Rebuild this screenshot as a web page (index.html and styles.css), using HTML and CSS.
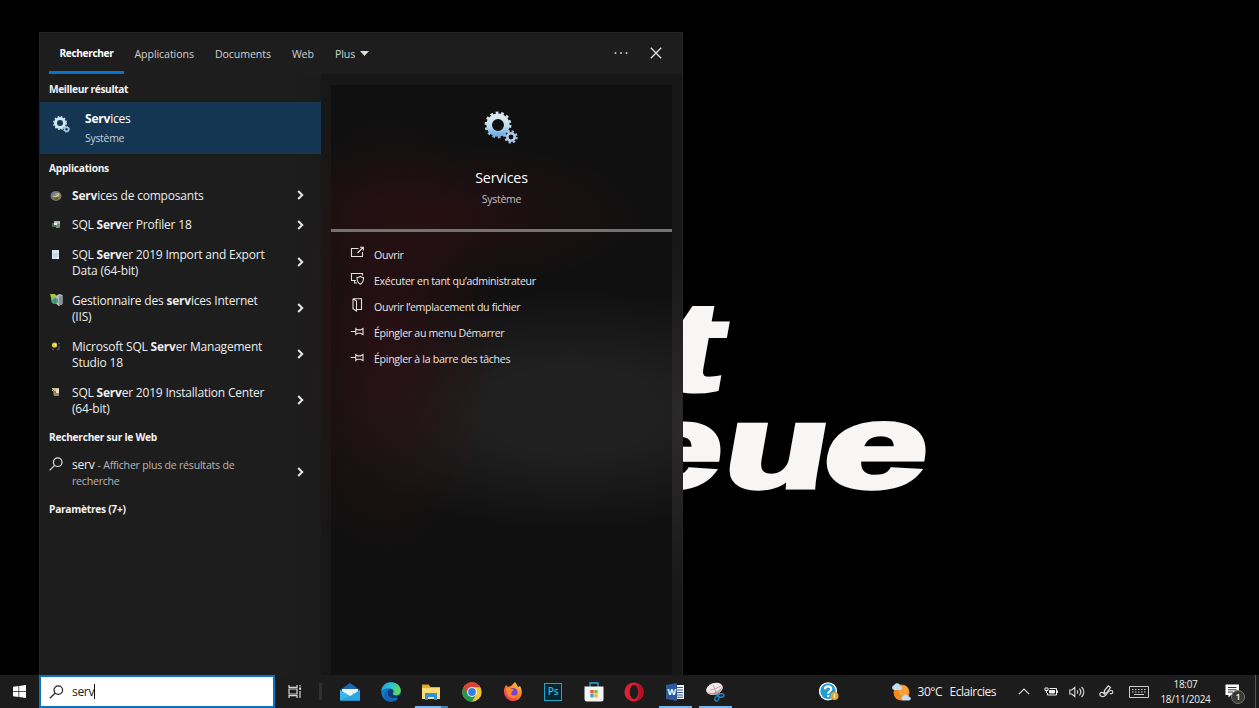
FILE: index.html
```html
<!DOCTYPE html>
<html lang="fr">
<head>
<meta charset="utf-8">
<title>Recherche - Services</title>
<link rel="stylesheet" href="styles.css">
</head>
<body>
<div class="desktop">
  <svg class="wallpaper" viewBox="0 0 1259 675" width="1259" height="675">
    <text class="wall-text" transform="translate(613 487) skewX(-10) scale(1.45 1)" x="18.500 6.500 73.200" y="-97 0 0" font-size="117"><tspan font-size="125">t</tspan>eu</text>
    <text class="wall-text" transform="translate(818.5 487) skewX(-10) scale(1.58 1)" x="0" y="0" font-size="118">e</text>
  </svg>

  <main class="search-panel">
    <header class="tabs">
      <a class="tab active">Rechercher</a>
      <a class="tab">Applications</a>
      <a class="tab">Documents</a>
      <a class="tab">Web</a>
      <a class="tab">Plus <svg width="9" height="5" viewBox="0 0 9 5"><path d="M0 0h9L4.500 5z" fill="#ddd"/></svg></a>
      <span class="tab-tools">
        <svg width="14" height="4" viewBox="0 0 14 4" fill="#ccc"><circle cx="1.500" cy="2" r="1"/><circle cx="7" cy="2" r="1"/><circle cx="12.500" cy="2" r="1"/></svg>
        <svg width="12" height="12" viewBox="0 0 12 12"><path d="M.8.8l10.400 10.400M11.200.8L.8 11.200" stroke="#e2e2e2" stroke-width="1.300"/></svg>
      </span>
    </header>

    <div class="panel-body">
      <section class="results">
        <h2 class="group first">Meilleur résultat</h2>
        <div class="best">
          <svg width="17" height="17" viewBox="0 0 34 34">
            <circle cx="14" cy="14" r="9" fill="none" stroke="#cfe6f2" stroke-width="6"/>
            <circle cx="14" cy="14" r="12.400" fill="none" stroke="#cfe6f2" stroke-width="3" stroke-dasharray="3.250 3.250"/>
            <circle cx="27" cy="26.500" r="4" fill="none" stroke="#a9cbe6" stroke-width="3"/>
            <circle cx="27" cy="26.500" r="6" fill="none" stroke="#a9cbe6" stroke-width="2" stroke-dasharray="2.350 2.350"/>
          </svg>
          <div class="best-text"><span class="best-name"><b>Serv</b>ices</span><span class="best-kind">Système</span></div>
        </div>

        <h2 class="group">Applications</h2>
        <div class="row short">
          <svg class="app-icon" width="12" height="12" viewBox="0 0 12 12"><ellipse cx="6" cy="6" rx="5.500" ry="5" fill="#77736c"/><circle cx="4" cy="4" r="2.200" fill="#6f7d9b"/><circle cx="7.500" cy="5" r="2.300" fill="#c0a663"/><circle cx="6" cy="8.200" r="2" fill="#6b5c3c"/><path d="M3 6l3 1 3-3" stroke="#ddd1a8" fill="none"/></svg>
          <span class="name"><b>Serv</b>ices de composants</span>
          <svg class="chev" width="7" height="10" viewBox="0 0 7 10"><path d="M1.200 1l4 4-4 4"/></svg>
        </div>
        <div class="row short">
          <svg class="app-icon" width="12" height="12" viewBox="0 0 12 12"><path d="M4 2h6v4H4z" fill="#a9bbb2"/><path d="M2 4h4v4H2z" fill="#3f7556"/><path d="M6 5h4v4H6z" fill="#72937c"/><path d="M4 4h3v2H4z" fill="#e3ece6"/></svg>
          <span class="name">SQL <b>Serv</b>er Profiler 18</span>
          <svg class="chev" width="7" height="10" viewBox="0 0 7 10"><path d="M1.200 1l4 4-4 4"/></svg>
        </div>
        <div class="row">
          <svg class="app-icon" width="12" height="12" viewBox="0 0 12 12"><path d="M2 1h7v9H2z" fill="#d5e5f3"/><path d="M3 4h5v4H3z" fill="#c5d8e9"/><path d="M7 8h2v2H7z" fill="#fff"/></svg>
          <span class="name">SQL <b>Serv</b>er 2019 Import and Export<br>Data (64-bit)</span>
          <svg class="chev" width="7" height="10" viewBox="0 0 7 10"><path d="M1.200 1l4 4-4 4"/></svg>
        </div>
        <div class="row">
          <svg class="app-icon iis" width="13" height="13" viewBox="0 0 13 13"><circle cx="5" cy="7" r="4" fill="#3b8d9b"/><path d="M0 1h5l2 3-3 1-2 3z" fill="#9fca38"/><path d="M2 7l4 3-2 1z" fill="#48a35a"/><path d="M5.500 3l4-2 3 1v9l-4 2-2-2z" fill="#b8bdbf"/><path d="M9 3.500l3.500-1.300v9L9 12.700z" fill="#8b9096"/><path d="M6 5l2 1v4l-2-1z" fill="#4e9f6c"/></svg>
          <span class="name">Gestionnaire des <b>serv</b>ices Internet<br>(IIS)</span>
          <svg class="chev" width="7" height="10" viewBox="0 0 7 10"><path d="M1.200 1l4 4-4 4"/></svg>
        </div>
        <div class="row">
          <svg class="app-icon" width="12" height="12" viewBox="0 0 12 12"><circle cx="4.500" cy="4" r="2.600" fill="#e4cd3a"/><circle cx="5.500" cy="3.500" r="1" fill="#fff6b0"/><path d="M8 2l2 1M9 5v3l-2 1" stroke="#405375" stroke-width="1.300" fill="none"/><path d="M2 8l2 1" stroke="#80763a"/></svg>
          <span class="name">Microsoft SQL <b>Serv</b>er Management<br>Studio 18</span>
          <svg class="chev" width="7" height="10" viewBox="0 0 7 10"><path d="M1.200 1l4 4-4 4"/></svg>
        </div>
        <div class="row">
          <svg class="app-icon" width="12" height="12" viewBox="0 0 12 12"><path d="M2 1h7v3H2z" fill="#c8bf91"/><path d="M3 4h6v5H4z" fill="#9a8a63"/><path d="M6 2h3v4H6z" fill="#e6dfc5"/><path d="M2 2l4 4" stroke="#726a47"/><path d="M7 6h2v3H7z" fill="#b9786a"/></svg>
          <span class="name">SQL <b>Serv</b>er 2019 Installation Center<br>(64-bit)</span>
          <svg class="chev" width="7" height="10" viewBox="0 0 7 10"><path d="M1.200 1l4 4-4 4"/></svg>
        </div>

        <h2 class="group web-head">Rechercher sur le Web</h2>
        <div class="row web">
          <svg class="app-icon" width="14" height="14" viewBox="0 0 14 14" fill="none" stroke="#ddd" stroke-width="1.200"><circle cx="8.700" cy="5.200" r="4.300"/><path d="M5.600 8.400L.6 13.400"/></svg>
          <span class="name">serv <small>- Afficher plus de résultats de<br>recherche</small></span>
          <svg class="chev" width="7" height="10" viewBox="0 0 7 10"><path d="M1.200 1l4 4-4 4"/></svg>
        </div>
        <h2 class="group">Paramètres (7+)</h2>
      </section>

      <section class="preview">
        <div class="hero">
          <svg width="35" height="34" viewBox="0 0 35 34">
            <defs><linearGradient id="steel" x1="0" y1="0" x2="0" y2="1"><stop offset="0" stop-color="#dde8f0"/><stop offset=".55" stop-color="#bfe0ec"/><stop offset="1" stop-color="#78aee3"/></linearGradient></defs>
            <circle cx="14" cy="14" r="8.800" fill="none" stroke="url(#steel)" stroke-width="5.600"/>
            <circle cx="14" cy="14" r="12.200" fill="none" stroke="url(#steel)" stroke-width="2.400" stroke-dasharray="2.740 2.740"/>
            <circle cx="27" cy="26" r="3.700" fill="#111" stroke="#b4cbea" stroke-width="2.600"/>
            <circle cx="27" cy="26" r="5.600" fill="none" stroke="#a5bfe4" stroke-width="2.200" stroke-dasharray="2.200 2.200"/>
          </svg>
          <h1>Services</h1>
          <p>Système</p>
        </div>
        <ul class="actions">
          <li><svg width="15" height="14" viewBox="0 0 15 14"><path d="M8.500 2.500h-7v8h11V6M7.500 7L13 1.500M10 1.300h3.300v3.300"/></svg><span>Ouvrir</span></li>
          <li><svg width="15" height="14" viewBox="0 0 15 14"><path d="M6 8.500H1.500v-7h11v2M4.500 8.500v2.500H7M7 5.500c1.500 0 2.500-.4 3.300-1.200.8.800 1.800 1.200 3.200 1.200 0 3.600-.7 5.400-3.200 6.700C7.800 10.900 7 9.100 7 5.500z"/></svg><span>Exécuter en tant qu’administrateur</span></li>
          <li><svg width="15" height="14" viewBox="0 0 15 14"><path d="M3 .7h8.500v10.800H7M3 .7v10l3.500 2.300V3L3 .7"/></svg><span>Ouvrir l’emplacement du fichier</span></li>
          <li><svg width="15" height="14" viewBox="0 0 15 14"><path d="M.8 6.500h5M5.800 2.800v7.400M5.800 4l2.200.9h2.500l2.500-1.400v6l-2.500-1.300H8L5.800 9"/></svg><span>Épingler au menu Démarrer</span></li>
          <li><svg width="15" height="14" viewBox="0 0 15 14"><path d="M.8 6.500h5M5.800 2.800v7.400M5.800 4l2.200.9h2.500l2.500-1.400v6l-2.500-1.300H8L5.800 9"/></svg><span>Épingler à la barre des tâches</span></li>
        </ul>
      </section>
    </div>
  </main>

  <footer class="taskbar">
    <div class="start"><svg width="13" height="13" viewBox="0 0 13 13" fill="#fff"><path d="M0 1.800l5.500-.8v5.200H0zM6.200.9L13 0v6.200H6.200zM0 6.900h5.500V12L0 11.200zM6.200 6.900H13V13l-6.800-.9z"/></svg></div>
    <div class="search-box">
      <svg width="15" height="14" viewBox="0 0 15 14" fill="none" stroke="#222" stroke-width="1.200"><circle cx="9.300" cy="5.100" r="4.300"/><path d="M6.100 8.300L.8 13.300"/></svg>
      <span class="query">serv</span><i class="caret"></i>
    </div>
    <div class="task-view"><svg width="14" height="13" viewBox="0 0 14 13" fill="none" stroke="#d6d6d6" stroke-width="1.200"><path d="M1 0v2.400h8V0M1 13v-2.400h8V13M1 4h8v5H1zM12 0v1.500M12 6v7"/><path d="M11.100 2.500h2v2.300h-2z" fill="#ddd" stroke="none"/></svg></div>
    <i class="divider"></i>
    <div class="apps">
      <span class="app"><svg width="20" height="20" viewBox="0 0 20 20"><path d="M0 8l10-7 10 7v10H0z" fill="#1868b6"/><path d="M2 7h16v3l-7 5-9-5z" fill="#f0f4f8"/><path d="M0 8l11 6.500L20 18.500H0z" fill="#35b8ee"/><path d="M0 18.500L11 13.500 20 8v10.500z" fill="#2ba6e4"/></svg></span>
      <span class="app"><svg width="20" height="20" viewBox="0 0 20 20"><defs><linearGradient id="edge" x1="0" y1="0" x2="1" y2=".3"><stop offset="0" stop-color="#1d9de0"/><stop offset=".55" stop-color="#2bc3d2"/><stop offset="1" stop-color="#65d65a"/></linearGradient></defs><circle cx="10" cy="10" r="9.800" fill="#1576c8"/><path d="M.3 9C1 3.500 5 .2 10 .2c5.800 0 9.800 4 9.800 8.300 0 3-2.300 4.800-4.900 4.800-2.100 0-3.200-.7-3.200-1.500 0-.5.800-.9.800-2.100 0-2-2-3.500-4.800-3.500C4.500 6.200 1.500 7.400.3 9z" fill="url(#edge)"/><path d="M6.500 11c0-2 1.300-3.500 3-4.200 2 .4 3 1.500 3 2.900 0 1.200-.8 1.500-.8 2.100 0 1.100 1.500 1.900 3.600 1.900 1.500 0 2.500-.4 3.300-.8-1.100 2-3.400 3.300-6 3.300-3.400 0-6.100-2.200-6.100-5.200z" fill="#0d3d73"/><path d="M16 13.700c2 0 3.200-.9 3.200-.9l.5 1.700-3 4z" fill="#1c1c1c"/><path d="M6.500 11c0 5 5 6.900 9.700 4.400-2.500 4.300-7 5-10.500 3.300C1.800 16.500 2 9.500 9.500 6.800 7.800 7.500 6.500 9 6.500 11z" fill="#1764b5"/></svg></span>
      <span class="app open two"><svg width="20" height="18" viewBox="0 0 20 18"><path d="M1 2h7l1.500 2H19v12H1z" fill="#e9aa32"/><path d="M1 5h18v11H1z" fill="#ffdb77"/><path d="M4 10h12v7h-3v-3H7v3H4z" fill="#3193d7"/><path d="M1 1.500h7V3H1z" fill="#dda12b"/></svg></span>
      <span class="app"><svg width="20" height="20" viewBox="0 0 20 20"><circle cx="10" cy="10" r="9.700" fill="#f5c733"/><path d="M10 10L1.600 5.100A9.700 9.700 0 0 0 10 19.700l4.200-7.300z" fill="#25974c"/><path d="M10 10V5.200h8.400A9.700 9.700 0 0 0 1.600 5.100L5.800 12.400z" fill="#df4034"/><circle cx="10" cy="10" r="4.900" fill="#fff"/><circle cx="10" cy="10" r="3.900" fill="#347ee8"/></svg></span>
      <span class="app"><svg width="20" height="20" viewBox="0 0 20 20"><defs><linearGradient id="fox" x1="1" y1="0" x2=".2" y2="1"><stop offset="0" stop-color="#ffdf3e"/><stop offset=".45" stop-color="#ff8b26"/><stop offset="1" stop-color="#ed2860"/></linearGradient></defs><path d="M3 3l2 2 3-1 4-4 2 3 1 2 2-1c4 7 1 15-7 15C3 19-2 11 3 3z" fill="url(#fox)"/><circle cx="10" cy="10.500" r="4.600" fill="#7742d3"/><path d="M3 6l4-1 1 2 3 .500-2 2-1 3c2 2 5 1 6.200-.6-.6 4.500-7.500 5.500-9.700 1z" fill="#ff8725"/></svg></span>
      <span class="app"><span class="ps">Ps</span></span>
      <span class="app"><svg width="20" height="20" viewBox="0 0 20 20"><path d="M6 5V1h8v4" fill="none" stroke="#2ba7dd" stroke-width="1.300"/><path d="M.5 4.500h19V17a2.500 2.500 0 0 1-2.500 2.500H3A2.500 2.500 0 0 1 .500 17z" fill="#f5f5f5"/><path d="M6.300 8h3.400v3.400H6.300z" fill="#eb5536"/><path d="M10.300 8h3.400v3.400h-3.400z" fill="#7fb93e"/><path d="M6.300 12h3.400v3.400H6.300z" fill="#3e9fe0"/><path d="M10.300 12h3.400v3.400h-3.400z" fill="#f4b92f"/></svg></span>
      <span class="app"><svg width="20" height="20" viewBox="0 0 20 20"><ellipse cx="10" cy="10" rx="9.600" ry="9.400" fill="#df2033"/><path d="M10 .6c5.500 0 9.600 4 9.600 9.400s-4.100 9.400-9.600 9.400c3-1 5-4.500 5-9.400S13 1.600 10 .6z" fill="#b51324"/><ellipse cx="10" cy="10" rx="4.300" ry="7.200" fill="#1d1d1d"/></svg></span>
      <span class="app open"><svg width="19" height="18" viewBox="0 0 19 18"><path d="M9 2h9v14H9z" fill="#f7f9fc"/><path d="M11 4.500h6M11 7h6M11 9.500h6M11 12h6M11 14.200h6" stroke="#2e579c"/><path d="M0 2l11-2v18L0 16z" fill="#2e579c"/><text x="1.400" y="12" class="word-letter">W</text></svg></span>
      <span class="app open"><svg width="21" height="20" viewBox="0 0 21 20"><ellipse cx="9.500" cy="6.800" rx="8.500" ry="5.800" transform="rotate(-18 9.500 6.800)" fill="#f1e9ea"/><path d="M2 10c4 2 11 0 15-5-1 5-4 8-8 8-3 0-6-1-7-3z" fill="#c7a6ab"/><path d="M5 8l5-1 6-3M10 7L8 3" stroke="#d09aa0" fill="none"/><path d="M10 8l3 7M9 12l6 0" stroke="#999"/><ellipse cx="12" cy="16.500" rx="1.900" ry="2.700" transform="rotate(25 12 16.500)" fill="none" stroke="#2387c5" stroke-width="1.400"/><ellipse cx="16" cy="13.500" rx="2.900" ry="1.700" fill="none" stroke="#2387c5" stroke-width="1.400"/></svg></span>
    </div>
    <div class="help"><svg width="20" height="19" viewBox="0 0 20 19"><circle cx="9" cy="9.300" r="8.400" fill="#249bd2" stroke="#f5f9fb" stroke-width="1.400"/><path d="M6 7.200C6 3.500 12.300 3.500 12.300 7c0 2.300-3.100 2.300-3.100 4.700M9.200 13v2" fill="none" stroke="#fff" stroke-width="2.100"/><circle cx="15.500" cy="14" r="4" fill="#e1a831"/><path d="M15.500 11.600v4.600" stroke="#fff5c8" stroke-width="1.200"/></svg></div>
    <div class="weather"><svg width="21" height="20" viewBox="0 0 21 20"><circle cx="10.500" cy="10.500" r="8" fill="#f18b24"/><circle cx="12.500" cy="9" r="5" fill="#f7a13a"/><path d="M3 8a2.400 2.400 0 0 1 0-4.700C4.500.3 8.500.8 9 3.500a2.300 2.300 0 0 1 .5 4.500zM12 18.500a2.400 2.400 0 0 1 .3-4.600c1.300-2.300 4.700-1.800 5.200.5a2.100 2.100 0 0 1 .8 4.100z" fill="#c6dcf4"/></svg><span class="temp">30°C</span><span class="sky">Eclaircies</span></div>
    <div class="tray">
      <svg class="t1" width="12" height="7" viewBox="0 0 12 7" fill="none" stroke="#ddd" stroke-width="1.200"><path d="M.8 6.200L6 1l5.200 5.200"/></svg>
      <svg class="t2" width="14" height="10" viewBox="0 0 14 10"><path d="M5.500 1.500H12.500v6.500H3.500V6" fill="none" stroke="#eee"/><path d="M5.500 3.500h5v2.500h-5z" fill="#eee" stroke="#eee"/><path d="M13 3.500h1v2.500h-1z" fill="#eee"/><path d="M1 1h3v2.500H1zM2.500 3.500V6" stroke="#eee" fill="none"/></svg>
      <svg class="t3" width="16" height="12" viewBox="0 0 16 12" fill="none" stroke="#ddd" stroke-width="1.100"><path d="M.8 4h2l3-2.500v9L2.800 8h-2zM8 4.300c1 1 1 2.400 0 3.400M10.300 2.700c2 2 2 4.600 0 6.600M12.600 1c3 3 3 7 0 10"/></svg>
      <svg class="t4" width="15" height="14" viewBox="0 0 15 14" fill="none" stroke="#ddd" stroke-width="1.200"><path d="M6.200 9.500C3.500 6.300.8 7.300.8 9.300c0 2.500 4 3 5.700 1l3-3.600c1.500-1.800 4.300-1.500 4.300.3 0 1.500-1.600 2-3 1.500"/><path d="M5.200 8.500l.3-3L9.300.9l2.200 1.700-3.800 5z"/></svg>
      <svg class="t5" width="20" height="12" viewBox="0 0 20 12" fill="none" stroke="#ccc"><path d="M.5.5h19v11H.5z"/><path d="M3 3.500h14M3 6h14" stroke-dasharray="1.500 1.500"/><path d="M5 8.500h10"/></svg>
    </div>
    <div class="clock"><span>18:07</span><span>18/11/2024</span></div>
    <div class="notify"><svg width="15" height="14" viewBox="0 0 15 14"><path d="M.500.500h13.500v10.500H6L3.500 13.500V11h-3z" fill="#fff"/><path d="M3 3.500h8.500M3 5.800h8.500M3 8.100h5" stroke="#333"/></svg><b class="badge">1</b></div>
  </footer>
</div>
</body>
</html>
```

FILE: styles.css
```css
* { box-sizing: border-box; }
body { margin: 0; background: #000; color: #f0f0f0; font-family: "Open Sans", "Noto Sans", sans-serif; }
h1, h2, p, ul { margin: 0; padding: 0; font-weight: 400; }
svg { display: block; flex: none; }
b { font-weight: 700; }

.desktop { position: relative; width: 1259px; height: 708px; overflow: hidden; display: flex; flex-direction: column; background: #000; }
.wallpaper { position: absolute; left: 0; top: 0; }
.wall-text { font-family: "Liberation Sans", sans-serif; font-weight: 700; fill: #f8f5f5; stroke: #f8f5f5; stroke-width: 5px; }

.search-panel { position: relative; width: 644px; height: 643px; margin: 32px 0 0 39px; display: flex; flex-direction: column; background: #171717; border: 1px solid #252525; border-width: 1px 1px 0; overflow: hidden; flex: none; }
.tabs { height: 41px; flex: none; display: flex; align-items: stretch; padding-left: 9px; background: #1d1d1d; font-size: 10.6px; letter-spacing: -.08px; color: #d0d0d0; }
.tab { display: flex; align-items: center; gap: 5px; padding: 0 10.5px; white-space: nowrap; }
.tab.active { font-weight: 700; color: #fff; border-bottom: 3px solid #0873c8; padding-top: 2px; width: 75px; font-size: 10.2px; letter-spacing: -.4px; }
.tab-tools { margin-left: auto; display: flex; align-items: center; gap: 22px; padding: 0 20px 1px 0; }

.panel-body { flex: 1; display: flex; gap: 10px; background: radial-gradient(ellipse 70px 210px at 290px 250px, #241315, transparent), radial-gradient(ellipse 60px 180px at 640px 350px, #2d2a2b, transparent), #171717; }
.results { width: 281px; background: linear-gradient(90deg, #1d1d1d 88%, rgba(29, 29, 29, .72)); }
.group { height: 27px; display: flex; align-items: center; padding: 1px 0 0 9px; font-size: 10.2px; letter-spacing: -.27px; font-weight: 700; color: #f2f2f2; }
.group.first { height: 28px; padding-top: 2px; letter-spacing: -.38px; }
.group.web-head { padding: 0 0 1px 9px; }
.best { height: 52px; display: flex; gap: 15px; padding: 8px 0 0 13px; background: #143652; }
.best > svg { margin-top: 6px; }
.best-text { display: flex; flex-direction: column; }
.best-name { font-size: 12px; line-height: 18px; color: #fff; letter-spacing: -.2px; }
.best-kind { font-size: 10.5px; line-height: 21px; color: #c2ced8; letter-spacing: -.3px; }
.row { height: 46px; display: grid; grid-template-columns: 22px 1fr 7px; align-items: center; padding: 0 17px 0 10px; font-size: 12px; letter-spacing: -.2px; line-height: 16.5px; color: #ececec; }
.row.short { height: 29.5px; }
.row.web { height: 44px; }
.app-icon { align-self: start; margin-top: 8.5px; }
.iis { margin-top: 7px; }
.web .app-icon { margin-top: 6px; margin-left: -1px; }
.name { white-space: nowrap; }
.name small { font-size: 10.6px; letter-spacing: -.23px; color: #b6b6b6; }
.chev { margin-bottom: 2px; }
.short .chev { margin-bottom: 1px; }
.chev path { fill: none; stroke: #e6e6e6; stroke-width: 2; }

.preview { width: 341px; margin-top: 11px; background: radial-gradient(ellipse 200px 75px at 120px 130px, rgba(48, 15, 19, .6), transparent), radial-gradient(ellipse 110px 230px at 55px 250px, rgba(48, 15, 19, .75), transparent), radial-gradient(ellipse 260px 120px at 240px 325px, #202020 35%, transparent), #101010; }
.hero { height: 147px; border-bottom: 3px solid #777071; display: flex; flex-direction: column; align-items: center; padding-top: 26px; }
.hero h1 { margin-top: 22px; font-size: 14.3px; letter-spacing: -.2px; line-height: 22px; color: #fff; }
.hero p { margin-top: 1px; font-size: 10.6px; letter-spacing: -.3px; line-height: 18px; color: #c4bdbd; }
.actions { list-style: none; padding: 9.5px 0 0 18px; }
.actions li { height: 26.2px; display: flex; align-items: center; gap: 10px; font-size: 10.6px; letter-spacing: -.3px; color: #e8e4e4; white-space: nowrap; }
.actions svg { margin: 0 -1px 3px 1px; fill: none; stroke: #e4dfdf; stroke-width: 1.1; }

.taskbar { position: relative; height: 33px; flex: none; display: flex; align-items: center; background: #1c1c1c; font-size: 12px; }
.start { width: 39px; display: flex; justify-content: center; }
.search-box { width: 236px; height: 33px; border: 2px solid #0b72c4; background: #fff; display: flex; align-items: center; padding-left: 8px; color: #222; }
.query { margin-left: 8px; font-size: 12.2px; letter-spacing: -.4px; }
.caret { width: 1px; height: 15px; background: #111; }
.task-view { width: 40px; display: flex; justify-content: center; }
.divider { width: 3px; height: 17px; margin-left: 4px; background: #303030; }
.apps { display: flex; margin-left: 7.7px; }
.app { position: relative; width: 40.65px; height: 33px; display: flex; justify-content: center; align-items: center; }
.app.open::after { content: ""; position: absolute; left: 4px; bottom: 0; width: 33px; height: 2px; background: #79b8ee; }
.app.two::after { background: linear-gradient(90deg, #79b8ee 26px, #4b7da9 26px); }
.ps { width: 18px; height: 18px; border: 1.500px solid #19a8c5; background: #062632; color: #28bcdc; font-size: 10px; line-height: 15px; text-align: center; font-weight: 600; }
.word-letter { font: 700 9px "Open Sans", sans-serif; fill: #fff; }
.help { margin-left: 82.5px; }
.weather { display: flex; align-items: center; margin-left: 52px; color: #eee; white-space: nowrap; letter-spacing: -.5px; }
.temp { width: 32px; margin-left: 6px; }
.tray { display: flex; align-items: center; position: absolute; left: 1018px; }
.t2 { margin-left: 14px; }
.t3 { margin-left: 11px; }
.t4 { margin-left: 14px; }
.t5 { margin-left: 15px; }
.clock { position: absolute; left: 1155px; width: 61px; display: flex; flex-direction: column; align-items: center; font-size: 10px; letter-spacing: -.3px; line-height: 15px; color: #eee; }
.notify { position: absolute; left: 1225px; top: 9px; }
.taskbar::after { content: ""; position: absolute; left: 1255px; top: 0; width: 1px; height: 33px; background: #555; }
.badge { position: absolute; left: 6px; top: 6px; width: 14px; height: 14px; border-radius: 50%; border: 1px solid #777; background: #383838; color: #fff; font-size: 9px; line-height: 12px; text-align: center; font-weight: 600; }
```
